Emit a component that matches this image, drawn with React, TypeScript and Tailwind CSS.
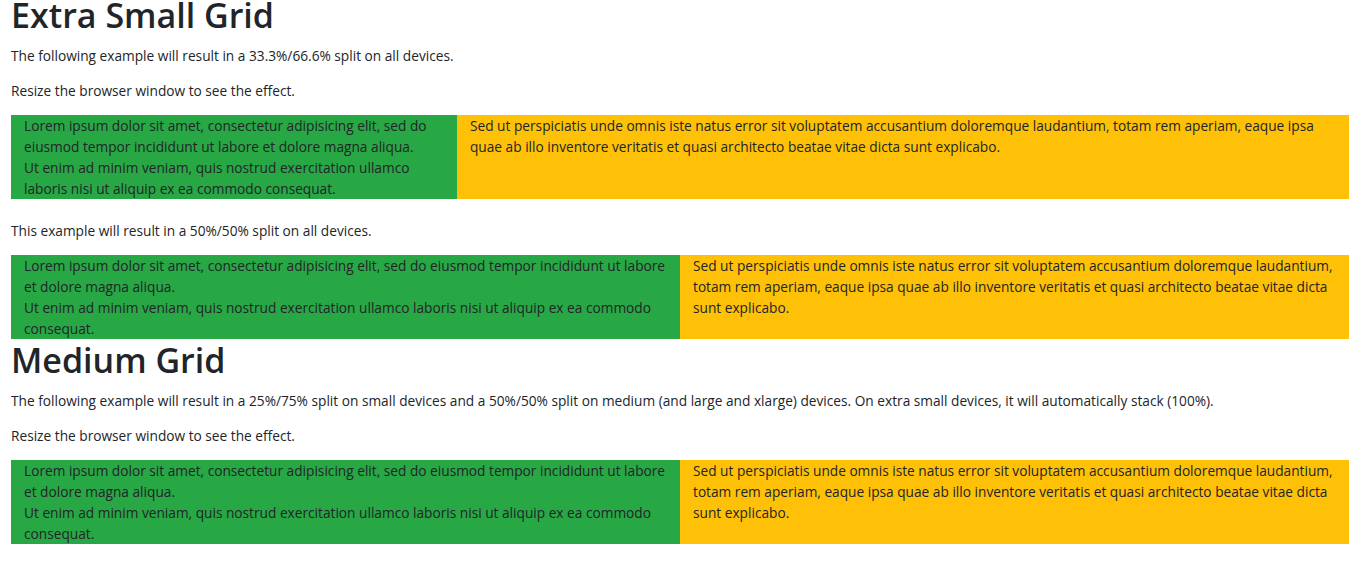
function Row({ left, right, split }: { left: React.ReactNode; right: React.ReactNode; split: "third" | "half" }) {
  return (
    <div className={split === "third" ? "grid grid-cols-[1fr_2fr]" : "grid grid-cols-2"}>
      <div className="bg-[#28a745] px-[13px]">{left}</div>
      <div className="bg-[#ffc107] px-[13px]">{right}</div>
    </div>
  )
}

const lorem = (
  <>
    Lorem ipsum dolor sit amet, consectetur adipisicing elit, sed do eiusmod tempor incididunt ut labore et dolore magna aliqua.
    <br />
    Ut enim ad minim veniam, quis nostrud exercitation ullamco laboris nisi ut aliquip ex ea commodo consequat.
  </>
)

const sed =
  "Sed ut perspiciatis unde omnis iste natus error sit voluptatem accusantium doloremque laudantium, totam rem aperiam, eaque ipsa quae ab illo inventore veritatis et quasi architecto beatae vitae dicta sunt explicabo."

export default function App() {
  return (
    <div className="bg-white pl-[11px] pr-[13px] font-['Open_Sans',sans-serif] text-[13.7px] leading-[21px] text-[#212529]">
      <h1 className="mb-[14px] text-[34px] leading-[31px] font-semibold">Extra Small Grid</h1>
      <p className="mb-[14px]">The following example will result in a 33.3%/66.6% split on all devices.</p>
      <p className="mb-[14px]">Resize the browser window to see the effect.</p>
      <Row split="third" left={lorem} right={sed} />
      <br />
      <p className="mb-[14px]">This example will result in a 50%/50% split on all devices.</p>
      <Row split="half" left={lorem} right={sed} />

      <h1 className="mb-[8px] text-[34px] leading-[43px] font-semibold">Medium Grid</h1>
      <p className="mb-[14px]">
        The following example will result in a 25%/75% split on small devices and a 50%/50% split on medium (and large and
        xlarge) devices. On extra small devices, it will automatically stack (100%).
      </p>
      <p className="mb-[14px]">Resize the browser window to see the effect.</p>
      <Row split="half" left={lorem} right={sed} />
    </div>
  )
}
